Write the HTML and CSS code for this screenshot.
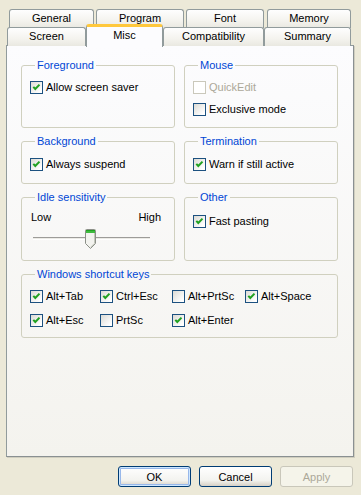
FILE: index.html
```html
<!DOCTYPE html>
<html lang="en">
<head>
  <meta charset="UTF-8">
  <title>Properties</title>
  <link rel="stylesheet" href="styles.css">
</head>
<body>
  <div class="dialog">
    <div class="tabs">
      <div class="tab-row back">
        <div class="tab t-general">General</div>
        <div class="tab t-program">Program</div>
        <div class="tab t-font">Font</div>
        <div class="tab t-memory">Memory</div>
      </div>
      <div class="tab-row front">
        <div class="tab t-screen">Screen</div>
        <div class="tab t-misc active">Misc</div>
        <div class="tab t-compat">Compatibility</div>
        <div class="tab t-summary">Summary</div>
      </div>
    </div>

    <div class="panel">
      <fieldset class="group g-fore">
        <legend>Foreground</legend>
        <label class="check"><span class="box on"></span>Allow screen saver</label>
      </fieldset>

      <fieldset class="group g-mouse">
        <legend>Mouse</legend>
        <label class="check disabled"><span class="box"></span>QuickEdit</label>
        <label class="check"><span class="box"></span>Exclusive mode</label>
      </fieldset>

      <fieldset class="group g-back">
        <legend>Background</legend>
        <label class="check"><span class="box on"></span>Always suspend</label>
      </fieldset>

      <fieldset class="group g-term">
        <legend>Termination</legend>
        <label class="check"><span class="box on"></span>Warn if still active</label>
      </fieldset>

      <fieldset class="group g-idle">
        <legend>Idle sensitivity</legend>
        <div class="scale"><span>Low</span><span>High</span></div>
        <div class="slider">
          <div class="track"></div>
          <svg class="thumb" width="11" height="20" viewBox="0 0 11 20">
            <path d="M1.5 0.5 H9.5 Q10.5 0.5 10.5 1.5 V14.5 L5.5 19.5 L0.5 14.5 V1.5 Q0.5 0.5 1.5 0.5 Z" fill="#f3f3ef" stroke="#8c9088"/>
            <rect x="1" y="1" width="9" height="3" fill="#3fbb3f"/>
            <rect x="1" y="1" width="9" height="1" fill="#21a121"/>
            <path d="M9.5 4 V14.3 L5.5 18.3" fill="none" stroke="#c3c6bb"/>
          </svg>
        </div>
      </fieldset>

      <fieldset class="group g-other">
        <legend>Other</legend>
        <label class="check"><span class="box on"></span>Fast pasting</label>
      </fieldset>

      <fieldset class="group g-keys">
        <legend>Windows shortcut keys</legend>
        <div class="keys">
          <label class="check"><span class="box on"></span>Alt+Tab</label>
          <label class="check"><span class="box on"></span>Ctrl+Esc</label>
          <label class="check"><span class="box"></span>Alt+PrtSc</label>
          <label class="check"><span class="box on"></span>Alt+Space</label>
          <label class="check"><span class="box on"></span>Alt+Esc</label>
          <label class="check"><span class="box"></span>PrtSc</label>
          <label class="check"><span class="box on"></span>Alt+Enter</label>
        </div>
      </fieldset>
    </div>

    <div class="buttons">
      <button class="btn default">OK</button>
      <button class="btn">Cancel</button>
      <button class="btn" disabled>Apply</button>
    </div>
  </div>
</body>
</html>
```

FILE: styles.css
```css
:root {
  --face: #ece9d8;
  --tab-border: #919b9c;
  --group-border: #d0d0bf;
  --group-text: #0046d5;
  --check-border: #1c5180;
  --check-green: #21a121;
  --disabled: #aca899;
}

* {
  box-sizing: border-box;
}

body {
  margin: 0;
  background: var(--face);
  font-family: "Liberation Sans", Arial, sans-serif;
  font-size: 11px;
  color: #000;
}

.dialog {
  width: 361px;
  height: 495px;
  padding-top: 9px;
}

/* tabs */
.tab-row {
  display: flex;
  height: 19px;
}

.tab-row.back {
  margin-left: 9px;
}

.tab-row.front {
  margin-left: 7px;
  margin-top: -1px;
  height: 18px;
}

.tab {
  height: 19px;
  border: 1px solid var(--tab-border);
  border-bottom: none;
  border-radius: 3px 3px 0 0;
  background: linear-gradient(#fefefe, #f4f3ee 60%, #e9e8e1);
  text-align: center;
  line-height: 17px;
}

.t-general { width: 85px; margin-right: 2px; }
.t-program { width: 88px; margin-right: 2px; }
.t-font { width: 78px; margin-right: 3px; }
.t-memory { width: 84px; }

.t-screen { width: 79px; }
.t-misc { width: 77px; }
.t-compat { width: 101px; }
.t-summary { width: 87px; }

.tab.active {
  position: relative;
  z-index: 1;
  height: 23px;
  margin-top: -3px;
  background: #fcfcfe;
  border-top: 3px solid #ffc83c;
  border-radius: 3px 3px 0 0;
  line-height: 17px;
}

/* panel */
.panel {
  margin-left: 6px;
  width: 348px;
  height: 412px;
  border: 1px solid var(--tab-border);
  border-right-color: #8a9092;
  border-bottom-color: #8a9092;
  background: linear-gradient(#fcfcfe, #f4f3ee);
  box-shadow: 1px 1px 0 #d0cebf;
  padding: 13px 0 0 14px;
  display: grid;
  grid-template-columns: 154px 154px;
  grid-template-rows: 69px 49px 70px 70px;
  column-gap: 9px;
  row-gap: 7px;
}

.group {
  margin: 0;
  padding: 0 8px;
  border: 1px solid var(--group-border);
  border-radius: 3px;
  min-width: 0;
}

.group legend {
  color: var(--group-text);
  padding: 0 2px;
  margin-left: 5px;
  line-height: 12px;
}

.g-fore, .g-mouse, .g-back, .g-term, .g-keys {
  padding-top: 10px;
}

.g-back, .g-term {
  padding-top: 11px;
}

.g-other {
  padding-top: 12px;
}

.g-keys {
  grid-column: 1 / 3;
}

/* checkboxes */
.check {
  display: flex;
  align-items: center;
  gap: 3px;
  height: 13px;
  line-height: 13px;
  white-space: nowrap;
}

.g-mouse .check + .check {
  margin-top: 9px;
}

.box {
  width: 13px;
  height: 13px;
  flex: none;
  border: 1px solid var(--check-border);
  background: linear-gradient(135deg, #dcdbd5, #fff 85%);
}

.box.on {
  background:
    url("data:image/svg+xml,%3Csvg xmlns='http://www.w3.org/2000/svg' width='11' height='11'%3E%3Cpath d='M2.3 4.8 L4.3 7 L8.5 2.6' fill='none' stroke='%2321a121' stroke-width='2'/%3E%3C/svg%3E") no-repeat,
    linear-gradient(135deg, #dcdbd5, #fff 85%);
}

.check.disabled {
  color: var(--disabled);
}

.check.disabled .box {
  border-color: #cac8bb;
  background: #fff;
}

.keys {
  display: grid;
  grid-template-columns: 70px 72px 73px 1fr;
  row-gap: 11px;
}

/* slider */
.scale {
  display: flex;
  justify-content: space-between;
  padding: 8px 5px 0 1px;
  line-height: 13px;
}

.slider {
  position: relative;
  height: 22px;
  margin: 4px 0 0 3px;
  width: 117px;
}

.track {
  position: absolute;
  left: 0;
  right: 0;
  top: 9px;
  height: 3px;
  border-top: 1px solid #9d9c99;
  border-bottom: 1px solid #fff;
  background: #ecebe6;
}

.thumb {
  position: absolute;
  left: 52px;
  top: 1px;
}

/* buttons */
.buttons {
  display: flex;
  justify-content: flex-end;
  gap: 8px;
  padding-right: 8px;
  margin-top: 9px;
}

.btn {
  width: 73px;
  height: 21px;
  padding: 0;
  font: inherit;
  color: #000;
  border: 1px solid #003c74;
  border-radius: 3px;
  background: linear-gradient(#fff, #f3f3ef 70%, #d6d0c5);
}

.btn.default {
  box-shadow: inset 0 0 0 1px #cee7ff, inset 0 0 0 2px #98b8ea;
}

.btn:disabled {
  color: var(--disabled);
  border-color: #c9c7ba;
  background: #f5f4ea;
}
```
